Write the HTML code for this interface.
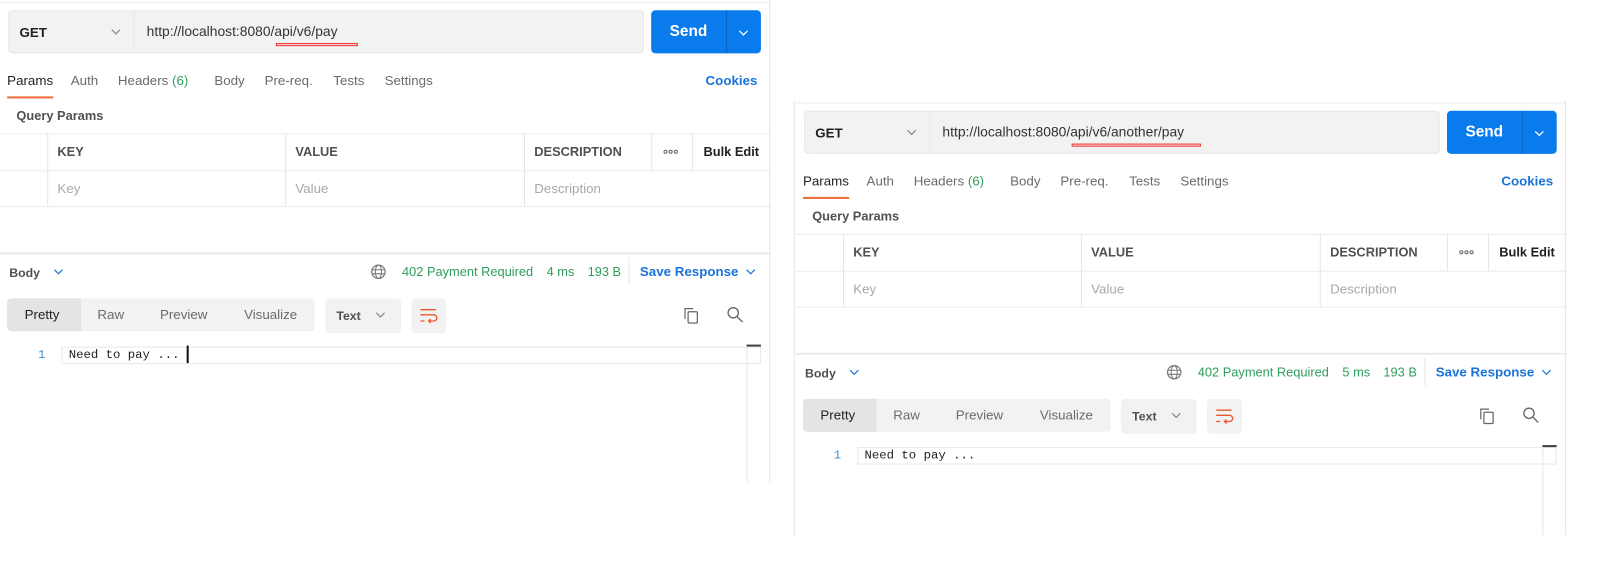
<!DOCTYPE html>
<html><head><meta charset="utf-8"><style>
*{margin:0;padding:0;box-sizing:border-box}
body{width:1608px;height:582px;background:#fff;overflow:hidden;font-family:"Liberation Sans",sans-serif;font-size:13px;color:#212121}
#wrap{position:absolute;left:0;top:0;width:1570px;height:568px;transform:scale(1.0255);transform-origin:0 0}
.p{position:absolute;width:752px;height:470px}
.p>*{position:absolute}
.g{color:#6b6b6b}
.bl{color:#1a73d9;font-weight:bold}
.gr{color:#2e9e5b}
.vl{width:1px;background:#e6e6e6}
.hl2{height:1px;background:#ececec}
.th{font-weight:bold;color:#505050;font-size:12.5px}
.ph{color:#a8a8a8}
.dots{font-size:0}
.dots i{display:inline-block;width:4px;height:4px;border:1px solid #666;border-radius:50%;margin-right:1px}
</style></head><body><div id="wrap">

<div class="p" style="left:0;top:0">
 <div class="hl2" style="left:0;top:2px;width:752px"></div>
 <div style="left:8px;top:10px;width:620px;height:42px;background:#f2f2f2;border:1px solid #e8e8e8;border-radius:4px"></div>
 <div class="vl" style="left:130px;top:11px;height:40px"></div>
 <div style="left:19px;top:24px;font-weight:bold;font-size:13px">GET</div>
 <svg style="left:108px;top:27px" width="10" height="8"><path d="M1 2l4 4 4-4" fill="none" stroke="#888" stroke-width="1.2"/></svg>
 <div style="left:143px;top:23px;font-size:13.5px;color:#333">http://localhost:8080/api/v6/pay</div>
 <div style="left:269px;top:42px;width:80px;height:3px;border:1px solid #e33;background:#fdd"></div>
 <div style="left:635px;top:10px;width:107px;height:42px;background:#097bed;border-radius:4px"></div>
 <div style="left:708px;top:10px;width:1px;height:42px;background:#0a62c4"></div>
 <div style="left:653px;top:22px;color:#fff;font-weight:bold;font-size:15px">Send</div>
 <svg style="left:720px;top:28px" width="10" height="8"><path d="M1 2l4 4 4-4" fill="none" stroke="#fff" stroke-width="1.2"/></svg>
 <div style="left:7px;top:71px">Params</div>
 <div style="left:7px;top:94px;width:45px;height:2px;background:#f26b3a"></div>
 <div class="g" style="left:69px;top:71px">Auth</div>
 <div class="g" style="left:115px;top:71px">Headers <span class="gr">(6)</span></div>
 <div class="g" style="left:209px;top:71px">Body</div>
 <div class="g" style="left:258px;top:71px">Pre-req.</div>
 <div class="g" style="left:325px;top:71px">Tests</div>
 <div class="g" style="left:375px;top:71px">Settings</div>
 <div class="bl" style="left:688px;top:71px">Cookies</div>
 <div style="left:16px;top:106px;font-weight:bold;color:#505050;font-size:12.5px">Query Params</div>
 <div class="hl2" style="left:0;top:130px;width:752px"></div>
 <div class="hl2" style="left:0;top:166px;width:752px"></div>
 <div class="hl2" style="left:0;top:201px;width:752px"></div>
 <div class="vl" style="left:46px;top:130px;height:71px"></div>
 <div class="vl" style="left:278px;top:130px;height:71px"></div>
 <div class="vl" style="left:511px;top:130px;height:71px"></div>
 <div class="vl" style="left:635px;top:130px;height:36px"></div>
 <div class="vl" style="left:675px;top:130px;height:36px"></div>
 <div class="vl" style="left:750px;top:0;height:470px"></div>
 <div class="th" style="left:56px;top:141px">KEY</div>
 <div class="th" style="left:288px;top:141px">VALUE</div>
 <div class="th" style="left:521px;top:141px">DESCRIPTION</div>
 <div class="dots" style="left:647px;top:146px"><i></i><i></i><i></i></div>
 <div style="left:686px;top:141px;font-weight:bold;font-size:12.5px">Bulk Edit</div>
 <div class="ph" style="left:56px;top:176px">Key</div>
 <div class="ph" style="left:288px;top:176px">Value</div>
 <div class="ph" style="left:521px;top:176px">Description</div>
 <div class="hl2" style="left:0;top:246px;width:752px;height:2px"></div>
 <div style="left:9px;top:259px;font-size:12px;color:#505050;font-weight:bold">Body</div>
 <svg style="left:52px;top:261px" width="10" height="8"><path d="M1 2l4 4 4-4" fill="none" stroke="#1a73d9" stroke-width="1.2"/></svg>
 <svg style="left:361px;top:257px" width="16" height="16"><circle cx="8" cy="8" r="6.5" fill="none" stroke="#777" stroke-width="1.2"/><ellipse cx="8" cy="8" rx="3" ry="6.5" fill="none" stroke="#777" stroke-width="1"/><path d="M1.5 6h13M1.5 10h13" stroke="#777" stroke-width="1"/></svg>
 <div class="gr" style="left:392px;top:258px;font-size:12.5px">402 Payment Required</div>
 <div class="gr" style="left:533px;top:258px;font-size:12.5px">4 ms</div>
 <div class="gr" style="left:573px;top:258px;font-size:12.5px">193 B</div>
 <div class="vl" style="left:613px;top:251px;height:27px"></div>
 <div class="bl" style="left:624px;top:257px">Save Response</div>
 <svg style="left:727px;top:261px" width="10" height="8"><path d="M1 2l4 4 4-4" fill="none" stroke="#1a73d9" stroke-width="1.2"/></svg>
 <div style="left:7px;top:291px;width:300px;height:32px;background:#f2f2f2;border-radius:4px"></div>
 <div style="left:7px;top:291px;width:72px;height:32px;background:#e4e4e4;border-radius:4px 0 0 4px"></div>
 <div style="left:24px;top:299px">Pretty</div>
 <div class="g" style="left:95px;top:299px">Raw</div>
 <div class="g" style="left:156px;top:299px">Preview</div>
 <div class="g" style="left:238px;top:299px">Visualize</div>
 <div style="left:317px;top:291px;width:74px;height:34px;background:#f2f2f2;border-radius:4px"></div>
 <div style="left:328px;top:301px;font-weight:bold;font-size:12px;color:#505050">Text</div>
 <svg style="left:366px;top:303px" width="10" height="8"><path d="M1 2l4 4 4-4" fill="none" stroke="#888" stroke-width="1.2"/></svg>
 <div style="left:401px;top:291px;width:34px;height:34px;background:#f2f2f2;border-radius:4px"></div>
 <svg style="left:408px;top:299px" width="20" height="18"><path d="M2 3h15M2 8h13a3 3 0 0 1 0 6h-5M12 12l-2 2 2 2M2 14h4" fill="none" stroke="#e8582a" stroke-width="1.3"/></svg>
 <svg style="left:665px;top:298px" width="18" height="20"><rect x="6" y="6" width="9" height="11" rx="1" fill="none" stroke="#666" stroke-width="1.2"/><path d="M3 13V3h8" fill="none" stroke="#666" stroke-width="1.2"/></svg>
 <svg style="left:708px;top:298px" width="18" height="18"><circle cx="7" cy="7" r="5" fill="none" stroke="#666" stroke-width="1.3"/><path d="M11 11l5 5" stroke="#666" stroke-width="1.3"/></svg>
 <div style="left:60px;top:338px;width:682px;height:17px;border:1px solid #e8e8e8"></div>
 <div style="left:728px;top:336px;width:14px;height:2px;background:#444"></div>
 <div class="vl" style="left:728px;top:338px;height:132px"></div>
 <div style="left:37px;top:339px;color:#3d8fd0;font-family:'Liberation Mono',monospace;font-size:12px">1</div>
 <div style="left:67px;top:339px;font-family:'Liberation Mono',monospace;font-size:12px">Need to pay ...</div>
 <div style="left:182px;top:337px;width:2px;height:17px;background:#111"></div>
</div>

<div class="p" style="left:776px;top:98px;height:424px">
 <div class="hl2" style="left:0;top:2px;width:752px"></div>
 <div class="vl" style="left:-2px;top:0;height:424px"></div>
 <div style="left:8px;top:10px;width:620px;height:42px;background:#f2f2f2;border:1px solid #e8e8e8;border-radius:4px"></div>
 <div class="vl" style="left:130px;top:11px;height:40px"></div>
 <div style="left:19px;top:24px;font-weight:bold;font-size:13px">GET</div>
 <svg style="left:108px;top:27px" width="10" height="8"><path d="M1 2l4 4 4-4" fill="none" stroke="#888" stroke-width="1.2"/></svg>
 <div style="left:143px;top:23px;font-size:13.5px;color:#333">http://localhost:8080/api/v6/another/pay</div>
 <div style="left:269px;top:42px;width:126px;height:3px;border:1px solid #e33;background:#fdd"></div>
 <div style="left:635px;top:10px;width:107px;height:42px;background:#097bed;border-radius:4px"></div>
 <div style="left:708px;top:10px;width:1px;height:42px;background:#0a62c4"></div>
 <div style="left:653px;top:22px;color:#fff;font-weight:bold;font-size:15px">Send</div>
 <svg style="left:720px;top:28px" width="10" height="8"><path d="M1 2l4 4 4-4" fill="none" stroke="#fff" stroke-width="1.2"/></svg>
 <div style="left:7px;top:71px">Params</div>
 <div style="left:7px;top:94px;width:45px;height:2px;background:#f26b3a"></div>
 <div class="g" style="left:69px;top:71px">Auth</div>
 <div class="g" style="left:115px;top:71px">Headers <span class="gr">(6)</span></div>
 <div class="g" style="left:209px;top:71px">Body</div>
 <div class="g" style="left:258px;top:71px">Pre-req.</div>
 <div class="g" style="left:325px;top:71px">Tests</div>
 <div class="g" style="left:375px;top:71px">Settings</div>
 <div class="bl" style="left:688px;top:71px">Cookies</div>
 <div style="left:16px;top:106px;font-weight:bold;color:#505050;font-size:12.5px">Query Params</div>
 <div class="hl2" style="left:0;top:130px;width:752px"></div>
 <div class="hl2" style="left:0;top:166px;width:752px"></div>
 <div class="hl2" style="left:0;top:201px;width:752px"></div>
 <div class="vl" style="left:46px;top:130px;height:71px"></div>
 <div class="vl" style="left:278px;top:130px;height:71px"></div>
 <div class="vl" style="left:511px;top:130px;height:71px"></div>
 <div class="vl" style="left:635px;top:130px;height:36px"></div>
 <div class="vl" style="left:675px;top:130px;height:36px"></div>
 <div class="vl" style="left:750px;top:0;height:424px"></div>
 <div class="th" style="left:56px;top:141px">KEY</div>
 <div class="th" style="left:288px;top:141px">VALUE</div>
 <div class="th" style="left:521px;top:141px">DESCRIPTION</div>
 <div class="dots" style="left:647px;top:146px"><i></i><i></i><i></i></div>
 <div style="left:686px;top:141px;font-weight:bold;font-size:12.5px">Bulk Edit</div>
 <div class="ph" style="left:56px;top:176px">Key</div>
 <div class="ph" style="left:288px;top:176px">Value</div>
 <div class="ph" style="left:521px;top:176px">Description</div>
 <div class="hl2" style="left:0;top:246px;width:752px;height:2px"></div>
 <div style="left:9px;top:259px;font-size:12px;color:#505050;font-weight:bold">Body</div>
 <svg style="left:52px;top:261px" width="10" height="8"><path d="M1 2l4 4 4-4" fill="none" stroke="#1a73d9" stroke-width="1.2"/></svg>
 <svg style="left:361px;top:257px" width="16" height="16"><circle cx="8" cy="8" r="6.5" fill="none" stroke="#777" stroke-width="1.2"/><ellipse cx="8" cy="8" rx="3" ry="6.5" fill="none" stroke="#777" stroke-width="1"/><path d="M1.5 6h13M1.5 10h13" stroke="#777" stroke-width="1"/></svg>
 <div class="gr" style="left:392px;top:258px;font-size:12.5px">402 Payment Required</div>
 <div class="gr" style="left:533px;top:258px;font-size:12.5px">5 ms</div>
 <div class="gr" style="left:573px;top:258px;font-size:12.5px">193 B</div>
 <div class="vl" style="left:613px;top:251px;height:27px"></div>
 <div class="bl" style="left:624px;top:257px">Save Response</div>
 <svg style="left:727px;top:261px" width="10" height="8"><path d="M1 2l4 4 4-4" fill="none" stroke="#1a73d9" stroke-width="1.2"/></svg>
 <div style="left:7px;top:291px;width:300px;height:32px;background:#f2f2f2;border-radius:4px"></div>
 <div style="left:7px;top:291px;width:72px;height:32px;background:#e4e4e4;border-radius:4px 0 0 4px"></div>
 <div style="left:24px;top:299px">Pretty</div>
 <div class="g" style="left:95px;top:299px">Raw</div>
 <div class="g" style="left:156px;top:299px">Preview</div>
 <div class="g" style="left:238px;top:299px">Visualize</div>
 <div style="left:317px;top:291px;width:74px;height:34px;background:#f2f2f2;border-radius:4px"></div>
 <div style="left:328px;top:301px;font-weight:bold;font-size:12px;color:#505050">Text</div>
 <svg style="left:366px;top:303px" width="10" height="8"><path d="M1 2l4 4 4-4" fill="none" stroke="#888" stroke-width="1.2"/></svg>
 <div style="left:401px;top:291px;width:34px;height:34px;background:#f2f2f2;border-radius:4px"></div>
 <svg style="left:408px;top:299px" width="20" height="18"><path d="M2 3h15M2 8h13a3 3 0 0 1 0 6h-5M12 12l-2 2 2 2M2 14h4" fill="none" stroke="#e8582a" stroke-width="1.3"/></svg>
 <svg style="left:665px;top:298px" width="18" height="20"><rect x="6" y="6" width="9" height="11" rx="1" fill="none" stroke="#666" stroke-width="1.2"/><path d="M3 13V3h8" fill="none" stroke="#666" stroke-width="1.2"/></svg>
 <svg style="left:708px;top:298px" width="18" height="18"><circle cx="7" cy="7" r="5" fill="none" stroke="#666" stroke-width="1.3"/><path d="M11 11l5 5" stroke="#666" stroke-width="1.3"/></svg>
 <div style="left:60px;top:338px;width:682px;height:17px;border:1px solid #e8e8e8"></div>
 <div style="left:728px;top:336px;width:14px;height:2px;background:#444"></div>
 <div class="vl" style="left:728px;top:338px;height:86px"></div>
 <div style="left:37px;top:339px;color:#3d8fd0;font-family:'Liberation Mono',monospace;font-size:12px">1</div>
 <div style="left:67px;top:339px;font-family:'Liberation Mono',monospace;font-size:12px">Need to pay ...</div>
</div>

</div></body></html>
